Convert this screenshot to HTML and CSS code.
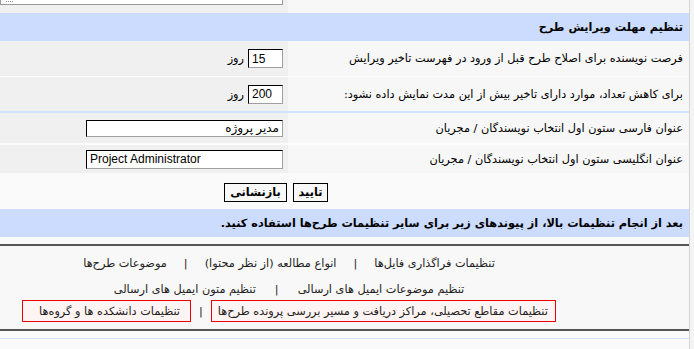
FILE: index.html
```html
<!DOCTYPE html>
<html lang="fa">
    <head>
        <meta http-equiv="Content-Type" content="text/html; charset=UTF-8">
        <title>تنظیمات طرح‌ها</title>
        <link rel="stylesheet" href="styles.css">
    </head>
    <body>
        <div class="page" dir="rtl">
            <div class="row row-top">
                <div class="label"></div>
                <div class="field"><div class="ta-tail"><span class="grip"></span></div></div>
            </div>
            <div class="head">تنظیم مهلت ویرایش طرح</div>
            <div class="row row-num">
                <div class="label">فرصت نویسنده برای اصلاح طرح قبل از ورود در فهرست تاخیر ویرایش</div>
                <div class="field"><input class="num" type="text" value="15" dir="ltr"> روز</div>
            </div>
            <div class="row row-num">
                <div class="label">برای کاهش تعداد، موارد دارای تاخیر بیش از این مدت نمایش داده نشود:</div>
                <div class="field"><input class="num" type="text" value="200" dir="ltr"> روز</div>
            </div>
            <div class="blue-line"></div>
            <div class="row row-text">
                <div class="label">عنوان فارسی ستون اول انتخاب نویسندگان / مجریان</div>
                <div class="field"><input class="txt" type="text" value="مدیر پروژه"></div>
            </div>
            <div class="row row-text">
                <div class="label">عنوان انگلیسی ستون اول انتخاب نویسندگان / مجریان</div>
                <div class="field"><input class="txt" type="text" value="Project Administrator" dir="ltr"></div>
            </div>
            <div class="buttons">
                <button class="btn ok">تایید</button>
                <button class="btn">بازنشانی</button>
            </div>
            <div class="head head-note">بعد از انجام تنظیمات بالا، از پیوندهای زیر برای سایر تنظیمات طرح‌ها استفاده کنید.</div>
            <div class="links">
                <div class="link-row">
                    <a href="#">تنظیمات فراگذاری فایل‌ها</a>
                    <span class="sep">|</span>
                    <a href="#">انواع مطالعه (از نظر محتوا)</a>
                    <span class="sep">|</span>
                    <a href="#">موضوعات طرح‌ها</a>
                </div>
                <div class="link-row second">
                    <a href="#">تنظیم موضوعات ایمیل های ارسالی</a>
                    <span class="sep">|</span>
                    <a href="#">تنظیم متون ایمیل های ارسالی</a>
                </div>
                <div class="link-row boxes">
                    <a href="#" class="boxed wide">تنظیمات مقاطع تحصیلی، مراکز دریافت و مسیر بررسی پرونده طرح‌ها</a>
                    <span class="sep">|</span>
                    <a href="#" class="boxed">تنظیمات دانشکده ها و گروه‌ها</a>
                </div>
            </div>
            <div class="foot"></div>
        </div>
    </body>
</html>
```

FILE: styles.css
```css
html {
    height: 100%;
}
body {
    margin: 0;
    background: #f4f4f4;
    font-family: "DejaVu Sans", sans-serif;
    font-size: 11.3px;
    color: #000;
}
.page {
    width: 689px;
    margin-right: auto;
    border-right: 1px solid #d4d4d4;
    background: #fafafa;
    height: 349px;
    overflow: hidden;
}
.row {
    display: flex;
}
.label {
    width: 395px;
    padding-right: 6px;
    background: #f7f7f7;
    display: flex;
    align-items: center;
}
.field {
    width: 283px;
    padding-right: 5px;
    background: #f0f0f0;
    display: flex;
    align-items: center;
    gap: 4px;
}
.row-top {
    height: 13px;
}
.row-top .field {
    align-items: flex-start;
}
.ta-tail {
    width: 283px;
    height: 4px;
    background: #fff;
    border: 1px solid #999;
    border-top: 0;
    position: relative;
}
.grip {
    position: absolute;
    left: 5px;
    top: 1px;
    width: 7px;
    border-top: 1px dotted #999;
}
.head {
    background: #ccdcff;
    height: 28px;
    display: flex;
    align-items: center;
    padding-right: 6px;
    font-weight: bold;
}
.row-num {
    height: 35px;
    border-bottom: 1px solid #fcfcfc;
}
.row-num + .row-num {
    height: 34px;
    border-bottom: 0;
}
.blue-line {
    height: 2px;
    background: #d4e0ff;
}
.row-text {
    height: 30px;
    border-bottom: 2px solid #fcfcfc;
}
.row-text + .row-text {
    height: 28px;
    border-bottom: 0;
}
input {
    font-family: "Liberation Sans", "DejaVu Sans", sans-serif;
    font-size: 12px;
    height: 19px;
    box-sizing: border-box;
    border: 1px solid;
    border-color: #000 #a0a0a0 #a0a0a0 #000;
    background: #fff;
    padding: 0 3px;
    margin: 0;
}
.num {
    width: 35px;
}
.txt {
    width: 197px;
}
.row-text .txt {
    height: 17px;
}
.row-text + .row-text .txt {
    height: 19px;
}
.buttons {
    height: 36px;
    background: #fafafa;
    display: flex;
    align-items: center;
    gap: 6px;
    padding-right: 361px;
}
.btn {
    font-family: "DejaVu Sans", sans-serif;
    font-size: 11.3px;
    font-weight: bold;
    height: 19px;
    width: 63px;
    background: #f8f8f8;
    border: 1px solid #000;
    padding: 0;
    margin-top: 2px;
}
.btn.ok {
    width: 35px;
}
.head-note {
    margin-bottom: 7px;
}
.links {
    border-top: 2px solid #555;
    border-bottom: 2px solid #555;
    background: #f8f8f8;
    padding: 6px 111px 0 0;
    display: flex;
    flex-direction: column;
    align-items: center;
    height: 77px;
}
.link-row {
    display: flex;
    align-items: center;
    gap: 17px;
    height: 22px;
}
.link-row.second {
    margin-top: 5px;
    height: 20px;
    gap: 19px;
}
.link-row.boxes {
    margin-top: 1px;
    gap: 8px;
}
.link-row a {
    color: #222;
    text-decoration: none;
}
.sep {
    color: #222;
}
.boxed {
    box-sizing: border-box;
    height: 22px;
    display: flex;
    align-items: center;
    border: 1px solid #e00;
    background: #fff4f4;
    padding: 0 10px 0 16px;
}
.boxed.wide {
    padding: 0 7px 0 6px;
}
.foot {
    margin-top: 7px;
    border-top: 1px solid #d8e2ff;
}
```
